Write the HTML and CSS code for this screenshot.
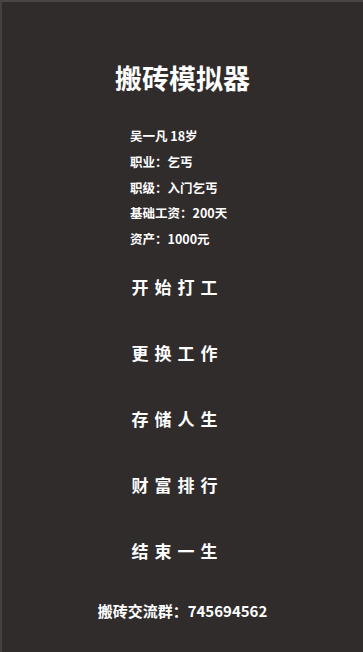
FILE: index.html
```html
<!DOCTYPE html>
<html lang="zh-CN">
<head>
    <meta charset="UTF-8">
    <meta name="viewport" content="width=device-width, initial-scale=1.0">
    <title>搬砖模拟器</title>
    <link rel="stylesheet" href="styles.css">
</head>
<body>
    <div class="game">
        <h1 class="game-title">搬砖模拟器</h1>

        <div class="player-info">
            <p>吴一凡 18岁</p>
            <p>职业：乞丐</p>
            <p>职级：入门乞丐</p>
            <p>基础工资：200天</p>
            <p>资产：1000元</p>
        </div>

        <div class="menu">
            <button class="menu-button">开始打工</button>
            <button class="menu-button">更换工作</button>
            <button class="menu-button">存储人生</button>
            <button class="menu-button">财富排行</button>
            <button class="menu-button">结束一生</button>
        </div>

        <div class="footer">搬砖交流群：745694562</div>
    </div>
</body>
</html>
```

FILE: styles.css
```css
html, body {
    margin: 0;
    padding: 0;
    height: 100%;
}
body {
    font-family: "Noto Sans CJK SC", "Noto Sans", sans-serif;
    background-color: #312c2c;
    color: #fff;
    overflow: hidden;
}
.game {
    box-sizing: border-box;
    height: 652px;
    border-top: 2px solid #4a4646;
    border-left: 2px solid #454141;
    padding-top: 62px;
}
.game-title {
    margin: 0;
    text-align: center;
    font-size: 27px;
    line-height: 27px;
    font-weight: bold;
}
.player-info {
    margin-top: 32px;
    padding-left: 128px;
    font-size: 12.5px;
    font-weight: bold;
}
.player-info p {
    margin: 0;
    line-height: 25.8px;
}
.menu {
    margin-top: 2px;
    display: flex;
    flex-direction: column;
    align-items: center;
}
.menu-button {
    height: 66px;
    background: none;
    border: none;
    color: #fff;
    font-family: inherit;
    font-size: 17px;
    font-weight: bold;
    letter-spacing: 6px;
    padding: 0 10px 0 0;
    cursor: pointer;
}
.footer {
    margin-top: 17px;
    text-align: center;
    font-size: 15px;
    line-height: 20px;
    font-weight: bold;
}
```
